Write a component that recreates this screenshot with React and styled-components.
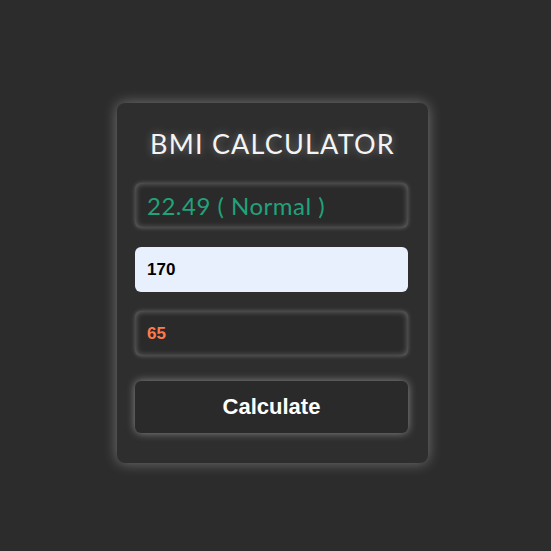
import styled, { createGlobalStyle } from 'styled-components';

const GlobalStyle = createGlobalStyle`
	html, body {
		margin: 0;
		padding: 0;
		background: #2c2c2c;
	}
`;

const Page = styled.div`
	min-height: 100vh;
	box-sizing: border-box;
	display: flex;
	justify-content: center;
	align-items: center;
	padding: 15px 6px 0 0;
`;

const Card = styled.div`
	width: 311px;
	box-sizing: border-box;
	padding: 20px 20px 30px 18px;
	background: #2e2e2e;
	border-radius: 8px;
	box-shadow: 0 0 14px rgba(255, 255, 255, 0.35);
	display: flex;
	flex-direction: column;
`;

const Title = styled.h1`
	margin: 0 0 18px 2px;
	font-family: 'Lato', 'Open Sans', sans-serif;
	font-weight: 400;
	font-size: 27px;
	line-height: 42px;
	letter-spacing: 1.2px;
	color: #f4f4f4;
	text-align: center;
	text-shadow: 0 0 8px rgba(255, 255, 255, 0.35);
`;

const Result = styled.div`
	height: 45px;
	box-sizing: border-box;
	padding: 0 12px;
	display: flex;
	align-items: center;
	border-radius: 6px;
	background: #2a2a2a;
	box-shadow: inset 0 0 6px rgba(255, 255, 255, 0.35), 0 0 4px rgba(255, 255, 255, 0.25);
	font-family: 'Lato', 'Open Sans', sans-serif;
	font-size: 24px;
	letter-spacing: 0.5px;
	color: #21a27a;
	margin-bottom: 19px;
`;

const Field = styled.input`
	height: 45px;
	box-sizing: border-box;
	padding: 0 12px;
	border: none;
	outline: none;
	border-radius: 6px;
	font-family: 'Liberation Sans', Arial, sans-serif;
	font-weight: 700;
	font-size: 17px;
	margin-bottom: ${(p) => p.$gap}px;
	background: ${(p) => (p.$filled ? '#e8f0fe' : '#2a2a2a')};
	color: ${(p) => (p.$filled ? '#000' : '#ff7a4a')};
	box-shadow: ${(p) =>
		p.$filled ? 'none' : 'inset 0 0 6px rgba(255, 255, 255, 0.35), 0 0 4px rgba(255, 255, 255, 0.25)'};
`;

const Button = styled.button`
	height: 52px;
	border: none;
	border-radius: 6px;
	background: #2a2a2a;
	color: #fff;
	font-family: 'Liberation Sans', Arial, sans-serif;
	font-weight: 700;
	font-size: 22px;
	box-shadow: 0 0 8px rgba(255, 255, 255, 0.45);
	cursor: pointer;
`;

const App = () => {
	return (
		<>
			<GlobalStyle />
			<Page>
				<Card>
					<Title>BMI CALCULATOR</Title>
					<Result>22.49 ( Normal )</Result>
					<Field $filled $gap={19} defaultValue="170" />
					<Field $gap={25} defaultValue="65" />
					<Button>Calculate</Button>
				</Card>
			</Page>
		</>
	);
};

export default App;
